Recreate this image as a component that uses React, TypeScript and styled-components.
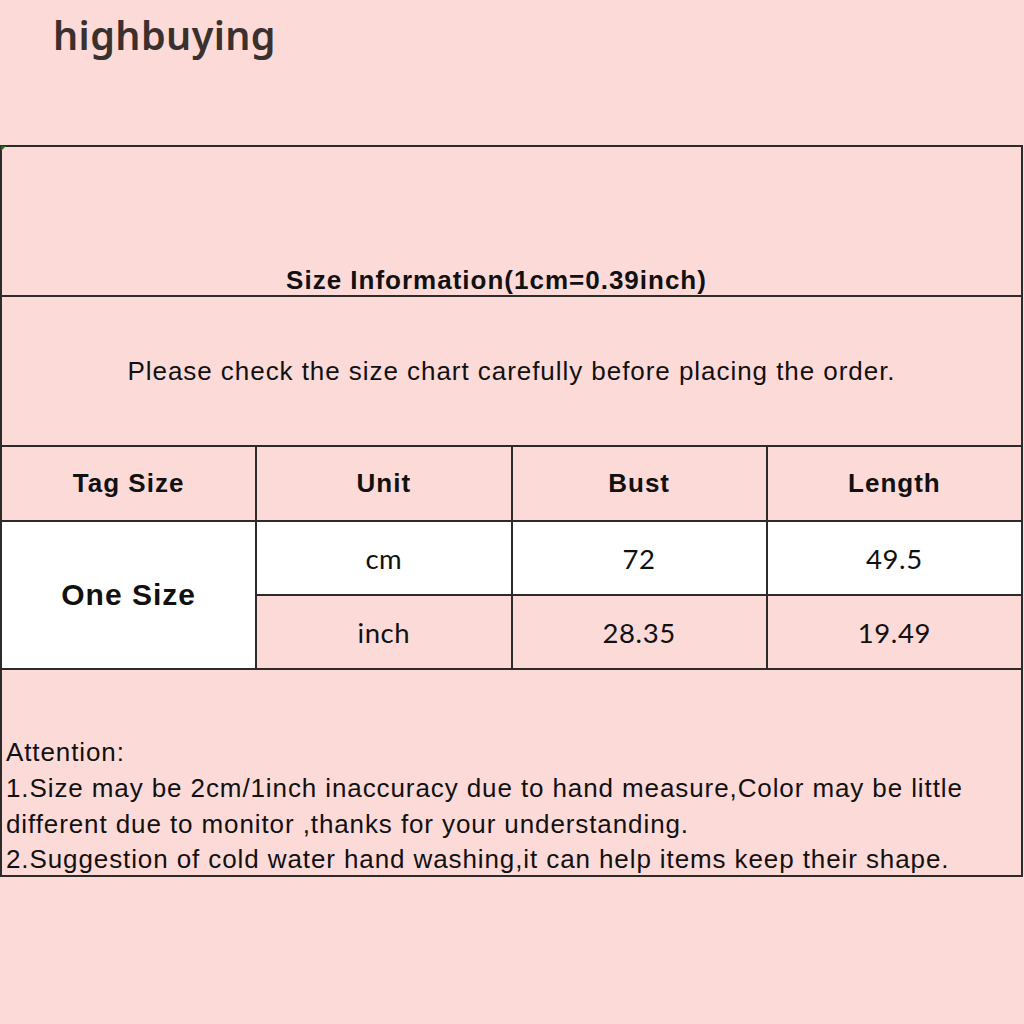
import React from 'react';
import styled, { createGlobalStyle } from 'styled-components';

const GlobalStyle = createGlobalStyle`
  html, body {
    margin: 0;
    padding: 0;
    background: #fcdad8;
  }
`;

const rows = [
  { unit: 'cm', bust: '72', length: '49.5', light: true },
  { unit: 'inch', bust: '28.35', length: '19.49', light: false },
];

const App = () => {
  return (
    <Page>
      <GlobalStyle />
      <Brand>highbuying</Brand>
      <ChartFrame>
        <Corner />
        <Chart>
          <tbody>
            <tr>
              <TitleCell colSpan={4}>Size Information(1cm=0.39inch)</TitleCell>
            </tr>
            <tr>
              <NoticeCell colSpan={4}>Please check the size chart carefully before placing the order.</NoticeCell>
            </tr>
            <tr>
              <HeadCell>Tag Size</HeadCell>
              <HeadCell>Unit</HeadCell>
              <HeadCell>Bust</HeadCell>
              <HeadCell>Length</HeadCell>
            </tr>
            {rows.map((r, i) => (
              <tr key={r.unit}>
                {i === 0 && <SizeCell rowSpan={2}>One Size</SizeCell>}
                <ValueCell $light={r.light}>{r.unit}</ValueCell>
                <ValueCell $light={r.light}>{r.bust}</ValueCell>
                <ValueCell $light={r.light}>{r.length}</ValueCell>
              </tr>
            ))}
            <tr>
              <NoteCell colSpan={4}>
                <NoteText>
                  Attention:
                  <br />
                  1.Size may be 2cm/1inch inaccuracy due to hand measure,Color may be little
                  <br />
                  different due to monitor ,thanks for your understanding.
                  <br />
                  2.Suggestion of cold water hand washing,it can help items keep their shape.
                </NoteText>
              </NoteCell>
            </tr>
          </tbody>
        </Chart>
      </ChartFrame>
    </Page>
  );
};

const Page = styled.div`
  width: 1024px;
  height: 1024px;
  background: #fcdad8;
  overflow: hidden;
`;

const Brand = styled.div`
  height: 145px;
  box-sizing: border-box;
  padding: 8px 0 0 53px;
  font-family: 'Noto Sans', sans-serif;
  font-weight: 600;
  font-size: 39.5px;
  letter-spacing: 0.4px;
  color: #3a302e;
`;

const ChartFrame = styled.div`
  position: relative;
  width: 1023px;
`;

const Corner = styled.div`
  position: absolute;
  left: 1px;
  top: 1px;
  width: 0;
  height: 0;
  border-top: 5px solid #1d6b1d;
  border-right: 5px solid transparent;
`;

const Chart = styled.table`
  width: 1023px;
  border-collapse: collapse;
  table-layout: fixed;
  border: 2px solid #2e2a2a;

  td {
    border: 2px solid #2e2a2a;
    padding: 0;
    text-align: center;
    color: #111;
    font-family: 'Liberation Sans', Arial, sans-serif;
  }
`;

const TitleCell = styled.td`
  height: 148px;
  vertical-align: bottom;
  padding-right: 30px !important;
  font-weight: 700;
  font-size: 26px;
  letter-spacing: 1px;
  line-height: 30px;
`;

const NoticeCell = styled.td`
  height: 148px;
  font-size: 26px;
  letter-spacing: 0.95px;
`;

const HeadCell = styled.td`
  height: 73px;
  font-weight: 700;
  font-size: 26px;
  letter-spacing: 1px;
`;

const SizeCell = styled.td`
  background: #ffffff;
  font-weight: 700;
  font-size: 30px;
  letter-spacing: 1px;
`;

const ValueCell = styled.td<{ $light: boolean }>`
  height: 72px;
  background: ${(p) => (p.$light ? '#ffffff' : 'transparent')};
  font-family: Lato, 'Open Sans', sans-serif !important;
  font-size: 27.5px;
  letter-spacing: 0.6px;
`;

const NoteCell = styled.td`
  height: 205px;
  vertical-align: bottom;
  text-align: left !important;
  padding-left: 4px !important;
  font-size: 26px;
  letter-spacing: 0.9px;
`;

const NoteText = styled.div`
  line-height: 35.7px;
  margin-bottom: -3px;
`;

export default App;
